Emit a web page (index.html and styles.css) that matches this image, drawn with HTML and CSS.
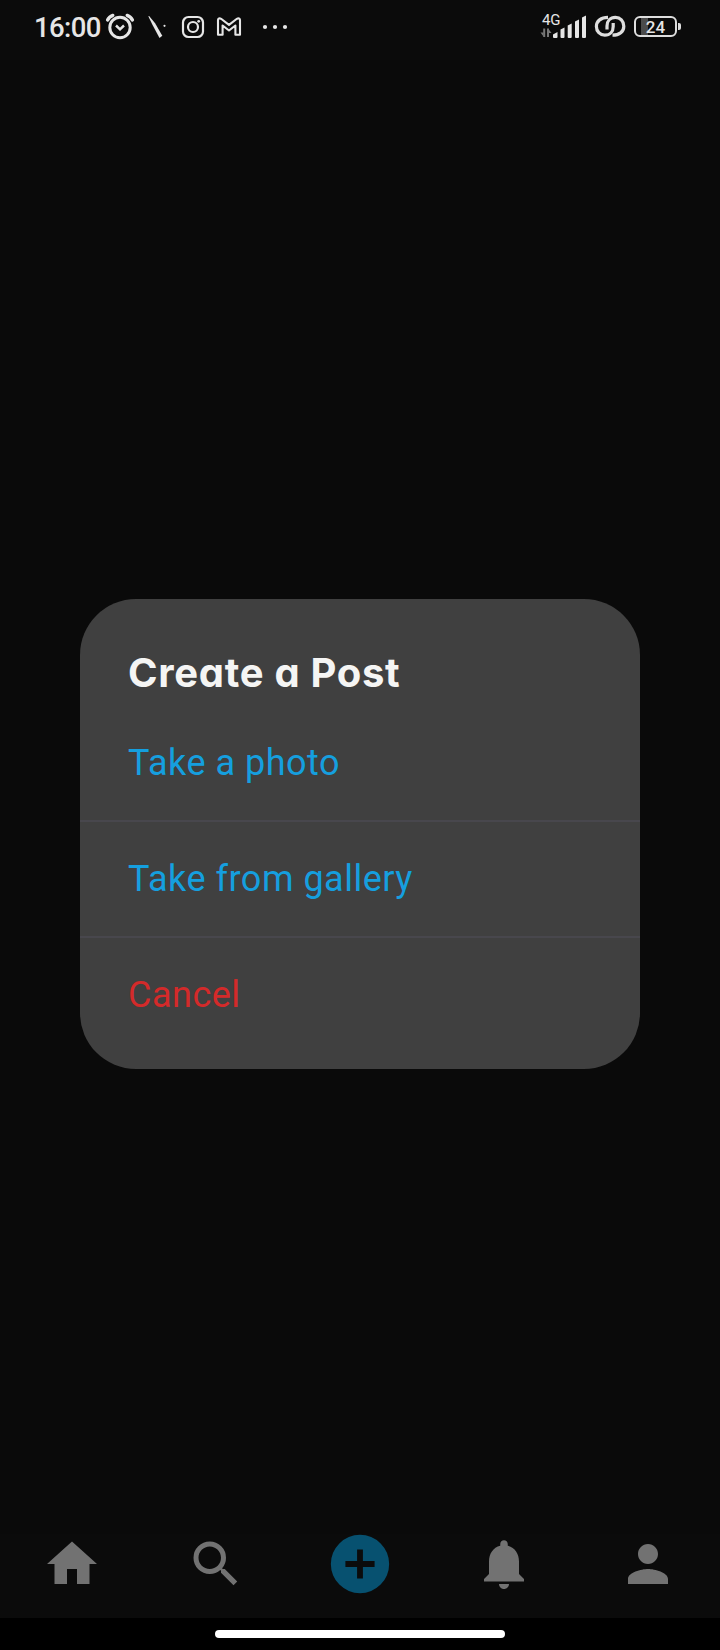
FILE: index.html
```html
<!DOCTYPE html>
<html lang="en">
<head>
<meta charset="utf-8">
<title>Create a Post</title>
<link rel="stylesheet" href="styles.css">
</head>
<body>
<div class="screen">
  <header class="status">
    <span class="clock">16:00</span>
    <svg class="status-left" width="206" height="40" viewBox="100 6 206 40" fill="none" stroke="#e6e6e6">
      <circle cx="120" cy="27.5" r="10.200" stroke-width="3"/>
      <path d="M116 25.500l4 3.800 4-3.800" stroke-width="2.500"/>
      <path d="M107.600 20q1.500-3.300 5.200-4.600M132.400 20q-1.500-3.300-5.200-4.600" stroke-width="3.400" stroke-linecap="round"/>
      <path d="M148.300 16.200l.8-.2 6 7.200 7.200 12.600-2.800 2.200-6.800-12.800z" fill="#e6e6e6" stroke="none"/>
      <circle cx="164.500" cy="25.800" r="1.100" fill="#e6e6e6" stroke="none"/>
      <rect x="183" y="17" width="20" height="20" rx="5.500" stroke-width="2.200"/>
      <circle cx="193" cy="27" r="5" stroke-width="2.200"/>
      <circle cx="198.700" cy="21.300" r="1.400" fill="#e6e6e6" stroke="none"/>
      <path d="M218 20.300q0-2 2-1.900l1.400.6 7.600 5.800 7.600-5.800 1.400-.6q2-.1 2 1.900V34.700h-4.600V25.500l-6.400 5-6.400-5v9.200H218z" stroke-width="2.100" stroke-linejoin="round"/>
      <g fill="#e6e6e6" stroke="none"><circle cx="265" cy="27" r="2.100"/><circle cx="275" cy="27" r="2.100"/><circle cx="285" cy="27" r="2.100"/></g>
    </svg>
    <div class="network">
      <span class="generation">4G</span>
      <svg width="48" height="24" viewBox="540 15 48 24" fill="#e6e6e6">
        <path d="M544.200 28.500v8.500M548 37v-8.500" fill="none" stroke="#777" stroke-width="2"/>
        <path d="M540.500 32.500h3v4zM551.500 33h-3v-4z" fill="#777"/>
        <path d="M553 34.500l4.500-2.500v5q0 1-1 1h-2.500q-1 0-1-1z"/>
        <path d="M560.500 29.500l4-2V37q0 1-1 1h-2q-1 0-1-1zM567.700 25.500l4-2V37q0 1-1 1h-2q-1 0-1-1zM575 21.500l4-2V37q0 1-1 1h-2q-1 0-1-1zM582 17.500l4-2V37q0 1-1 1h-2q-1 0-1-1z"/>
      </svg>
    </div>
    <svg class="link" width="32" height="24" viewBox="594 14 32 24" fill="none" stroke="#dedede" stroke-width="3.200">
      <path d="M608 17.400C601 17.400 596.400 21 596.400 26.400C596.400 31.500 600 35.200 604.800 35.200C610 35.200 613.200 31.500 613.200 26.500V23"/>
      <path d="M612.500 35.200C619.500 35.200 623.800 31.500 623.800 26.200C623.800 21 620.200 17.400 615.400 17.400C610.200 17.400 607 21 607 26V29.500"/>
    </svg>
    <div class="battery"><span class="level">24</span></div>
    <i class="battery-tip"></i>
  </header>

  <main class="stage">
    <section class="dialog">
      <h1 class="title">Create a Post</h1>
      <button class="option option-first">Take a photo</button>
      <button class="option">Take from gallery</button>
      <button class="option option-cancel">Cancel</button>
    </section>
  </main>

  <nav class="tabs">
    <a class="tab"><svg class="icon" viewBox="0 0 24 24"><path d="M10 20v-6h4v6h5v-8h3L12 3 2 12h3v8z"/></svg></a>
    <a class="tab"><svg class="icon" viewBox="0 0 24 24"><path d="M15.500 14h-.79l-.28-.27A6.471 6.471 0 0 0 16 9.500 6.500 6.500 0 1 0 9.500 16c1.610 0 3.090-.59 4.230-1.570l.27.28v.79l5 4.990L20.490 19l-4.990-5zm-6 0C7.010 14 5 11.990 5 9.500S7.010 5 9.500 5 14 7.010 14 9.500 11.990 14 9.500 14z"/></svg></a>
    <a class="tab"><svg class="icon icon-add" viewBox="0 0 24 24"><path d="M12 2a10 10 0 1 0 0 20 10 10 0 0 0 0-20zm5 11h-4v4h-2v-4H7v-2h4V7h2v4h4z"/></svg></a>
    <a class="tab"><svg class="icon" viewBox="0 0 24 24"><path d="M12 22c1.100 0 2-.9 2-2h-4c0 1.100.89 2 2 2zm6-6v-5c0-3.070-1.640-5.640-4.500-6.320V4c0-.83-.67-1.500-1.500-1.500s-1.500.67-1.500 1.500v.68C7.630 5.360 6 7.920 6 11v5l-2 2v1h16v-1l-2-2z"/></svg></a>
    <a class="tab"><svg class="icon" viewBox="0 0 24 24"><path d="M12 12c2.210 0 4-1.790 4-4s-1.790-4-4-4-4 1.790-4 4 1.790 4 4 4zm0 2c-2.670 0-8 1.340-8 4v2h16v-2c0-2.660-5.330-4-8-4z"/></svg></a>
  </nav>
  <footer class="gesture"><i class="pill"></i></footer>
</div>
</body>
</html>
```
FILE: styles.css
```css
* { box-sizing: border-box; }
body { margin: 0; background: #0a0a0a; font-family: Roboto, "Liberation Sans", sans-serif; }
.screen { width: 720px; height: 1650px; display: flex; flex-direction: column; background: #0a0a0a; }

.status { height: 60px; padding: 6px 39px 0 34px; display: flex; align-items: flex-start; color: #e6e6e6; background: #0b0b0b; }
.clock { width: 66px; font-size: 27.5px; font-weight: 500; line-height: 32px; padding-top: 6px; white-space: nowrap; letter-spacing: -.6px; }
.status-left { flex: none; }
.network { margin-left: auto; width: 48px; display: grid; padding-top: 9px; }
.network > * { grid-area: 1 / 1; }
.generation { font-size: 15px; line-height: 14px; margin: -2px 0 0 2px; letter-spacing: -.3px; }
.link { margin: 8px 0 0 6px; }
.battery { width: 43px; height: 21px; margin: 10px 0 0 8px; border: 2px solid #dedede; border-radius: 6px; background: linear-gradient(90deg, transparent 5px, #4b4b4b 5px, #4b4b4b 12px, transparent 12px); text-align: center; }
.level { display: block; font-size: 17px; line-height: 18px; font-weight: 500; letter-spacing: .2px; }
.battery-tip { width: 3px; height: 7px; margin: 17px 0 0 1px; border-radius: 0 2px 2px 0; background: #dedede; }

.stage { height: 1474px; display: flex; justify-content: center; align-items: flex-start; padding-top: 538.5px; }
.dialog { width: 560px; height: 470px; border-radius: 56px; background: #404040; overflow: hidden; }
.title { margin: 0; height: 105.5px; padding: 44.500px 0 0 48px; font: 650 40px/60px Inter, Lato, sans-serif; letter-spacing: .7px; font-feature-settings: "cv11"; color: #f5f5f4; white-space: nowrap; }
.option { display: block; width: 100%; height: 116px; padding: 0 48px; border: 0; border-bottom: 2px solid #48474d; background: none; color: #159fdf; font: 400 36px/114px Roboto, sans-serif; letter-spacing: .5px; text-align: left; }
.option.option-first { height: 118px; padding-top: 2px; }
.option.option-cancel { height: 114px; border-bottom: 0; color: #d42a2a; }

.tabs { height: 84px; display: grid; grid-template-columns: repeat(5, 1fr); background: #0b0b0b; }
.tab { display: flex; justify-content: center; align-items: center; height: 60px; }
.icon { flex: none; width: 60px; height: 60px; fill: #727272; }
.icon-add { width: 70px; height: 70px; fill: #075170; }
.gesture { height: 32px; background: #000; display: flex; justify-content: center; padding-top: 12px; }
.pill { width: 290px; height: 8px; border-radius: 4px; background: #fff; }
```
